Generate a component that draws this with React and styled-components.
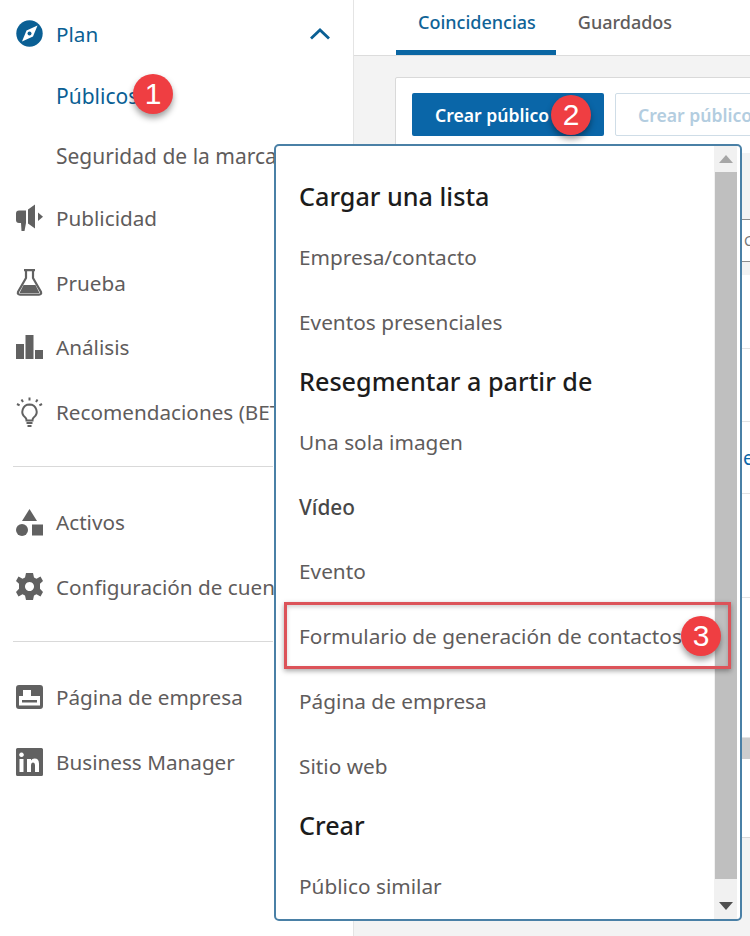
import React from "react";
import styled, { createGlobalStyle } from "styled-components";

const Global = createGlobalStyle`
  html, body { margin: 0; padding: 0; background: #fff; }
  * { box-sizing: border-box; }
`;

const FONT = `"Noto Sans", "Open Sans", "Liberation Sans", sans-serif`;

const Page = styled.div`
  position: relative;
  display: flex;
  width: 750px;
  height: 936px;
  overflow: hidden;
  font-family: ${FONT};
  background: #f3f3f3;
`;

const Sidebar = styled.nav`
  flex: 0 0 354px;
  height: 100%;
  padding-top: 2px;
  background: #fff;
  border-right: 1px solid #e4e4e4;
  overflow: hidden;
`;

const NavRow = styled.div`
  display: flex;
  align-items: center;
  height: ${(p) => (p.$head ? 64 : 64.5)}px;
  padding: 0 23px ${(p) => (p.$head ? 1 : 0)}px 16px;
  gap: 13px;
  font-size: 20.7px;
  white-space: nowrap;
  color: ${(p) => (p.$active ? "#0a5f94" : "#5f5c5c")};
`;

const SubRow = styled.div`
  display: flex;
  align-items: center;
  height: 60px;
  padding-left: 56px;
  font-size: 21px;
  white-space: nowrap;
  color: ${(p) => (p.$active ? "#0a5f94" : "#5f5c5c")};
`;

const IconSlot = styled.span`
  flex: 0 0 27px;
  display: flex;
  justify-content: center;
  align-items: center;
`;

const Chevron = styled.svg`
  margin-left: auto;
`;

const Divider = styled.hr`
  margin: 22px 0 23px 13px;
  height: 1px;
  width: 260px;
  border: 0;
  background: #d9d9d9;
`;

const Main = styled.main`
  flex: 1;
  min-width: 0;
  display: flex;
  flex-direction: column;
`;

const Tabs = styled.div`
  display: flex;
  height: 56px;
  padding-left: 42px;
  background: #fff;
  border-bottom: 1px solid #dcdcdc;
  flex: none;
`;

const Tab = styled.div`
  height: 55px;
  padding: 10px 20px 0 22px;
  font-size: 18px;
  font-weight: 500;
  white-space: nowrap;
  color: ${(p) => (p.$active ? "#0f6397" : "#5f5c5c")};
  border-bottom: ${(p) => (p.$active ? "5px solid #0a66a3" : "5px solid transparent")};
`;

const Card = styled.section`
  margin: 21px 0 0 41px;
  width: 420px;
  height: 761px;
  flex: none;
  background: #fff;
  border: 1px solid #d9d9d9;
  border-radius: 2px;
`;

const Toolbar = styled.div`
  display: flex;
  gap: 11px;
  height: 75px;
  padding: 15px 16px 0;
`;

const PrimaryButton = styled.div`
  flex: 0 0 192px;
  height: 43px;
  padding: 1px 0 0 23px;
  display: flex;
  align-items: center;
  font-size: 17.6px;
  font-weight: 600;
  color: #fff;
  background: #0a66a8;
  border-radius: 2px;
  white-space: nowrap;
`;

const GhostButton = styled.div`
  flex: 0 0 192px;
  height: 43px;
  padding: 1px 0 0 22px;
  display: flex;
  align-items: center;
  font-size: 17.6px;
  font-weight: 600;
  color: #b3cde0;
  background: #fff;
  border: 1px solid #cfdde7;
  border-radius: 2px;
  white-space: nowrap;
`;

const TableHead = styled.div`
  height: 66px;
  background: #f3f3f3;
`;

const FilterRow = styled.div`
  height: 43px;
  display: flex;
  align-items: center;
  padding-left: 348px;
  font-size: 14px;
  color: #777;
  border-top: 1px solid #8d8d8d;
  border-bottom: 1px solid #8d8d8d;
`;

const TableGap = styled.div`
  height: 13px;
  background: #f3f3f3;
`;

const TableRow = styled.div`
  height: ${(p) => p.$h}px;
  padding-left: 347px;
  display: flex;
  align-items: center;
  font-size: 19px;
  color: #0a66a8;
  border-bottom: 1px solid #e4e4e4;
`;

const Scrollstub = styled.div`
  height: 21px;
  background: #cdcdcd;
`;

const Popover = styled.div`
  position: absolute;
  left: 274px;
  top: 144px;
  width: 468px;
  height: 777px;
  display: flex;
  background: #fff;
  border: 2px solid #4a80a6;
  border-radius: 5px;
  overflow: hidden;
`;

const PopList = styled.div`
  flex: 1;
  padding: 23.4px 0 0 23px;
`;

const PopHeading = styled.div`
  height: 55.2px;
  padding-bottom: 2px;
  display: flex;
  align-items: center;
  font-size: 25.2px;
  font-weight: 500;
  color: #1c1c1c;
  white-space: nowrap;
`;

const PopItem = styled.div`
  height: 64.8px;
  display: flex;
  align-items: center;
  font-size: 20.8px;
  font-weight: ${(p) => (p.$strong ? 500 : 400)};
  color: ${(p) => (p.$strong ? "#474747" : "#5f5c5c")};
  white-space: nowrap;
`;

const Scrollbar = styled.div`
  flex: 0 0 23px;
  margin-right: 3px;
  display: flex;
  flex-direction: column;
  background: #f1f1f1;
`;

const ScrollArrow = styled.div`
  flex: 0 0 ${(p) => p.$h}px;
  display: flex;
  align-items: center;
  justify-content: center;
  padding-top: ${(p) => p.$pt || 0}px;
`;

const Thumb = styled.div`
  flex: 1;
  margin-left: 1px;
  background: #bfbfbf;
`;

const Highlight = styled.div`
  position: absolute;
  left: 284px;
  top: 602px;
  width: 447px;
  height: 67px;
  border: 3px solid #dc5359;
  box-shadow: 0 2px 5px rgba(0, 0, 0, 0.35), inset 0 2px 4px rgba(0, 0, 0, 0.18);
`;

const Badge = styled.div`
  position: absolute;
  left: ${(p) => p.$x}px;
  top: ${(p) => p.$y}px;
  width: 40px;
  height: 40px;
  border-radius: 50%;
  display: flex;
  align-items: center;
  justify-content: center;
  font-family: "Liberation Sans", Arial, sans-serif;
  font-size: 30px;
  color: #fff;
  background: #ef3e42;
  box-shadow: 0 4px 6px rgba(0, 0, 0, 0.38);
`;

const G = "#616161";
const B = "#0a5f94";

const Compass = () => (
  <svg width="27" height="27" viewBox="0 0 27 27">
    <circle cx="13.5" cy="13.5" r="13.2" fill={B} />
    <path d="M21.5 5.5 L17 16.5 L6 21.5 L10.5 10.5 Z" fill="#fff" />
    <circle cx="13.5" cy="13.5" r="2" fill={B} />
  </svg>
);
const Megaphone = () => (
  <svg width="27" height="28" viewBox="0 0 27 28">
    <path d="M0 9.5 Q0 6.5 3 6.5 H10 V19 H10 L8.5 27 H5.5 L5 19 H3 Q0 19 0 16 Z" fill={G} />
    <path d="M12 5.5 L19 0.5 V24.5 L12 19.5 Z" fill={G} />
    <path d="M22 8.5 L27 12.7 L22 17 Z" fill={G} />
  </svg>
);
const Flask = () => (
  <svg width="27" height="27" viewBox="0 0 27 27">
    <path d="M8 1.2 H19 M10 1.5 V9 L2 23 Q1.2 25.6 4 25.6 H23 Q25.8 25.6 25 23 L17 9 V1.5" fill="none" stroke={G} strokeWidth="2.2" />
    <path d="M7.5 16 H19.5 L23.5 24 H3.5 Z" fill={G} />
  </svg>
);
const Bars = () => (
  <svg width="27" height="24" viewBox="0 0 27 24">
    <rect x="0" y="9" width="8" height="15" fill={G} />
    <rect x="9.5" y="0" width="8" height="24" fill={G} />
    <rect x="19" y="15" width="8" height="9" fill={G} />
  </svg>
);
const Bulb = () => (
  <svg width="27" height="30" viewBox="0 0 27 30">
    <path d="M13.5 7.5 a7.2 7.2 0 0 0 -4.2 13 q1.2 1 1.2 3 h6 q0 -2 1.2 -3 a7.2 7.2 0 0 0 -4.2 -13 Z" fill="none" stroke={G} strokeWidth="2" />
    <path d="M10.5 26 h6 M11.5 29 h4" stroke={G} strokeWidth="2" />
    <path d="M13.5 0.5 v3 M5.5 2.5 l1.5 2.6 M21.5 2.5 l-1.5 2.6 M1 7 l2.6 1.4 M26 7 l-2.6 1.4" stroke={G} strokeWidth="2" />
  </svg>
);
const Shapes = () => (
  <svg width="27" height="27" viewBox="0 0 27 27">
    <path d="M13.5 0 L21 12 H6 Z" fill={G} />
    <circle cx="6" cy="21" r="6" fill={G} />
    <rect x="16" y="15.5" width="11" height="11" fill={G} />
  </svg>
);
const Gear = () => (
  <svg width="27" height="27" viewBox="0 0 27 27">
    <path fillRule="evenodd" fill={G} d="M10 0 H17 L18 4.5 L20.5 5.8 L24.5 3.6 L27 8 L24 10.8 V15.8 L27 19 L24.5 23.4 L20.5 21.2 L18 22.5 L17 27 H10 L9 22.5 L6.5 21.2 L2.5 23.4 L0 19 L3 15.8 V10.8 L0 8 L2.5 3.6 L6.5 5.8 L9 4.5 Z M13.5 9 a4.5 4.5 0 1 0 0.01 0 Z" />
  </svg>
);
const PageIcon = () => (
  <svg width="27" height="24" viewBox="0 0 27 24">
    <path fillRule="evenodd" fill={G} d="M3 0 H24 Q27 0 27 3 V21 Q27 24 24 24 H3 Q0 24 0 21 V3 Q0 0 3 0 Z M7 5 V11 H3 V20.5 H24 V11 H15 V5 Z" />
    <rect x="6" y="15" width="15" height="2.5" fill={G} />
  </svg>
);
const LinkedIn = () => (
  <svg width="27" height="28" viewBox="0 0 27 28">
    <path fillRule="evenodd" fill={G} d="M1.5 0 H25.5 Q27 0 27 1.5 V26.5 Q27 28 25.5 28 H1.5 Q0 28 0 26.5 V1.5 Q0 0 1.5 0 Z M3.5 11 V24 H7.5 V11 Z M5.5 4.5 a2.3 2.3 0 1 0 0.01 0 Z M11 11 V24 H15 V17 Q15 14.4 17 14.4 Q19 14.4 19 17 V24 H23 V16 Q23 10.6 18.6 10.6 Q16 10.6 15 12.6 V11 Z" />
  </svg>
);

const Arrow = ({ up, color }) => (
  <svg width="14" height="8" viewBox="0 0 14 8">
    <path d={up ? "M7 0 L14 8 H0 Z" : "M0 0 H14 L7 8 Z"} fill={color} />
  </svg>
);

export default function App() {
  return (
    <>
      <Global />
      <Page>
        <Sidebar>
          <NavRow $head $active>
            <IconSlot><Compass /></IconSlot>
            Plan
            <Chevron width="20" height="12" viewBox="0 0 20 12">
              <path d="M1 10.5 L10 2 L19 10.5" fill="none" stroke={B} strokeWidth="2.8" />
            </Chevron>
          </NavRow>
          <SubRow $active>Públicos</SubRow>
          <SubRow>Seguridad de la marca</SubRow>
          <NavRow><IconSlot><Megaphone /></IconSlot>Publicidad</NavRow>
          <NavRow><IconSlot><Flask /></IconSlot>Prueba</NavRow>
          <NavRow><IconSlot><Bars /></IconSlot>Análisis</NavRow>
          <NavRow><IconSlot><Bulb /></IconSlot>Recomendaciones (BETA)</NavRow>
          <Divider />
          <NavRow><IconSlot><Shapes /></IconSlot>Activos</NavRow>
          <NavRow><IconSlot><Gear /></IconSlot>Configuración de cuenta</NavRow>
          <Divider />
          <NavRow><IconSlot><PageIcon /></IconSlot>Página de empresa</NavRow>
          <NavRow><IconSlot><LinkedIn /></IconSlot>Business Manager</NavRow>
        </Sidebar>
        <Main>
          <Tabs>
            <Tab $active>Coincidencias</Tab>
            <Tab>Guardados</Tab>
          </Tabs>
          <Card>
            <Toolbar>
              <PrimaryButton>Crear público</PrimaryButton>
              <GhostButton>Crear público</GhostButton>
            </Toolbar>
            <TableHead />
            <FilterRow>C</FilterRow>
            <TableGap />
            <TableRow $h={74} />
            <TableRow $h={73} />
            <TableRow $h={72}>e</TableRow>
            <TableRow $h={104} />
            <TableRow $h={140} />
            <Scrollstub />
          </Card>
        </Main>
        <Popover>
          <PopList>
            <PopHeading>Cargar una lista</PopHeading>
            <PopItem>Empresa/contacto</PopItem>
            <PopItem>Eventos presenciales</PopItem>
            <PopHeading>Resegmentar a partir de</PopHeading>
            <PopItem>Una sola imagen</PopItem>
            <PopItem $strong>Vídeo</PopItem>
            <PopItem>Evento</PopItem>
            <PopItem>Formulario de generación de contactos</PopItem>
            <PopItem>Página de empresa</PopItem>
            <PopItem>Sitio web</PopItem>
            <PopHeading>Crear</PopHeading>
            <PopItem>Público similar</PopItem>
          </PopList>
          <Scrollbar>
            <ScrollArrow $h={26}><Arrow up color="#a6a6a6" /></ScrollArrow>
            <Thumb />
            <ScrollArrow $h={40} $pt={14}><Arrow color="#505050" /></ScrollArrow>
          </Scrollbar>
        </Popover>
        <Highlight />
        <Badge $x={133} $y={74}>1</Badge>
        <Badge $x={551} $y={95}>2</Badge>
        <Badge $x={681} $y={616}>3</Badge>
      </Page>
    </>
  );
}
